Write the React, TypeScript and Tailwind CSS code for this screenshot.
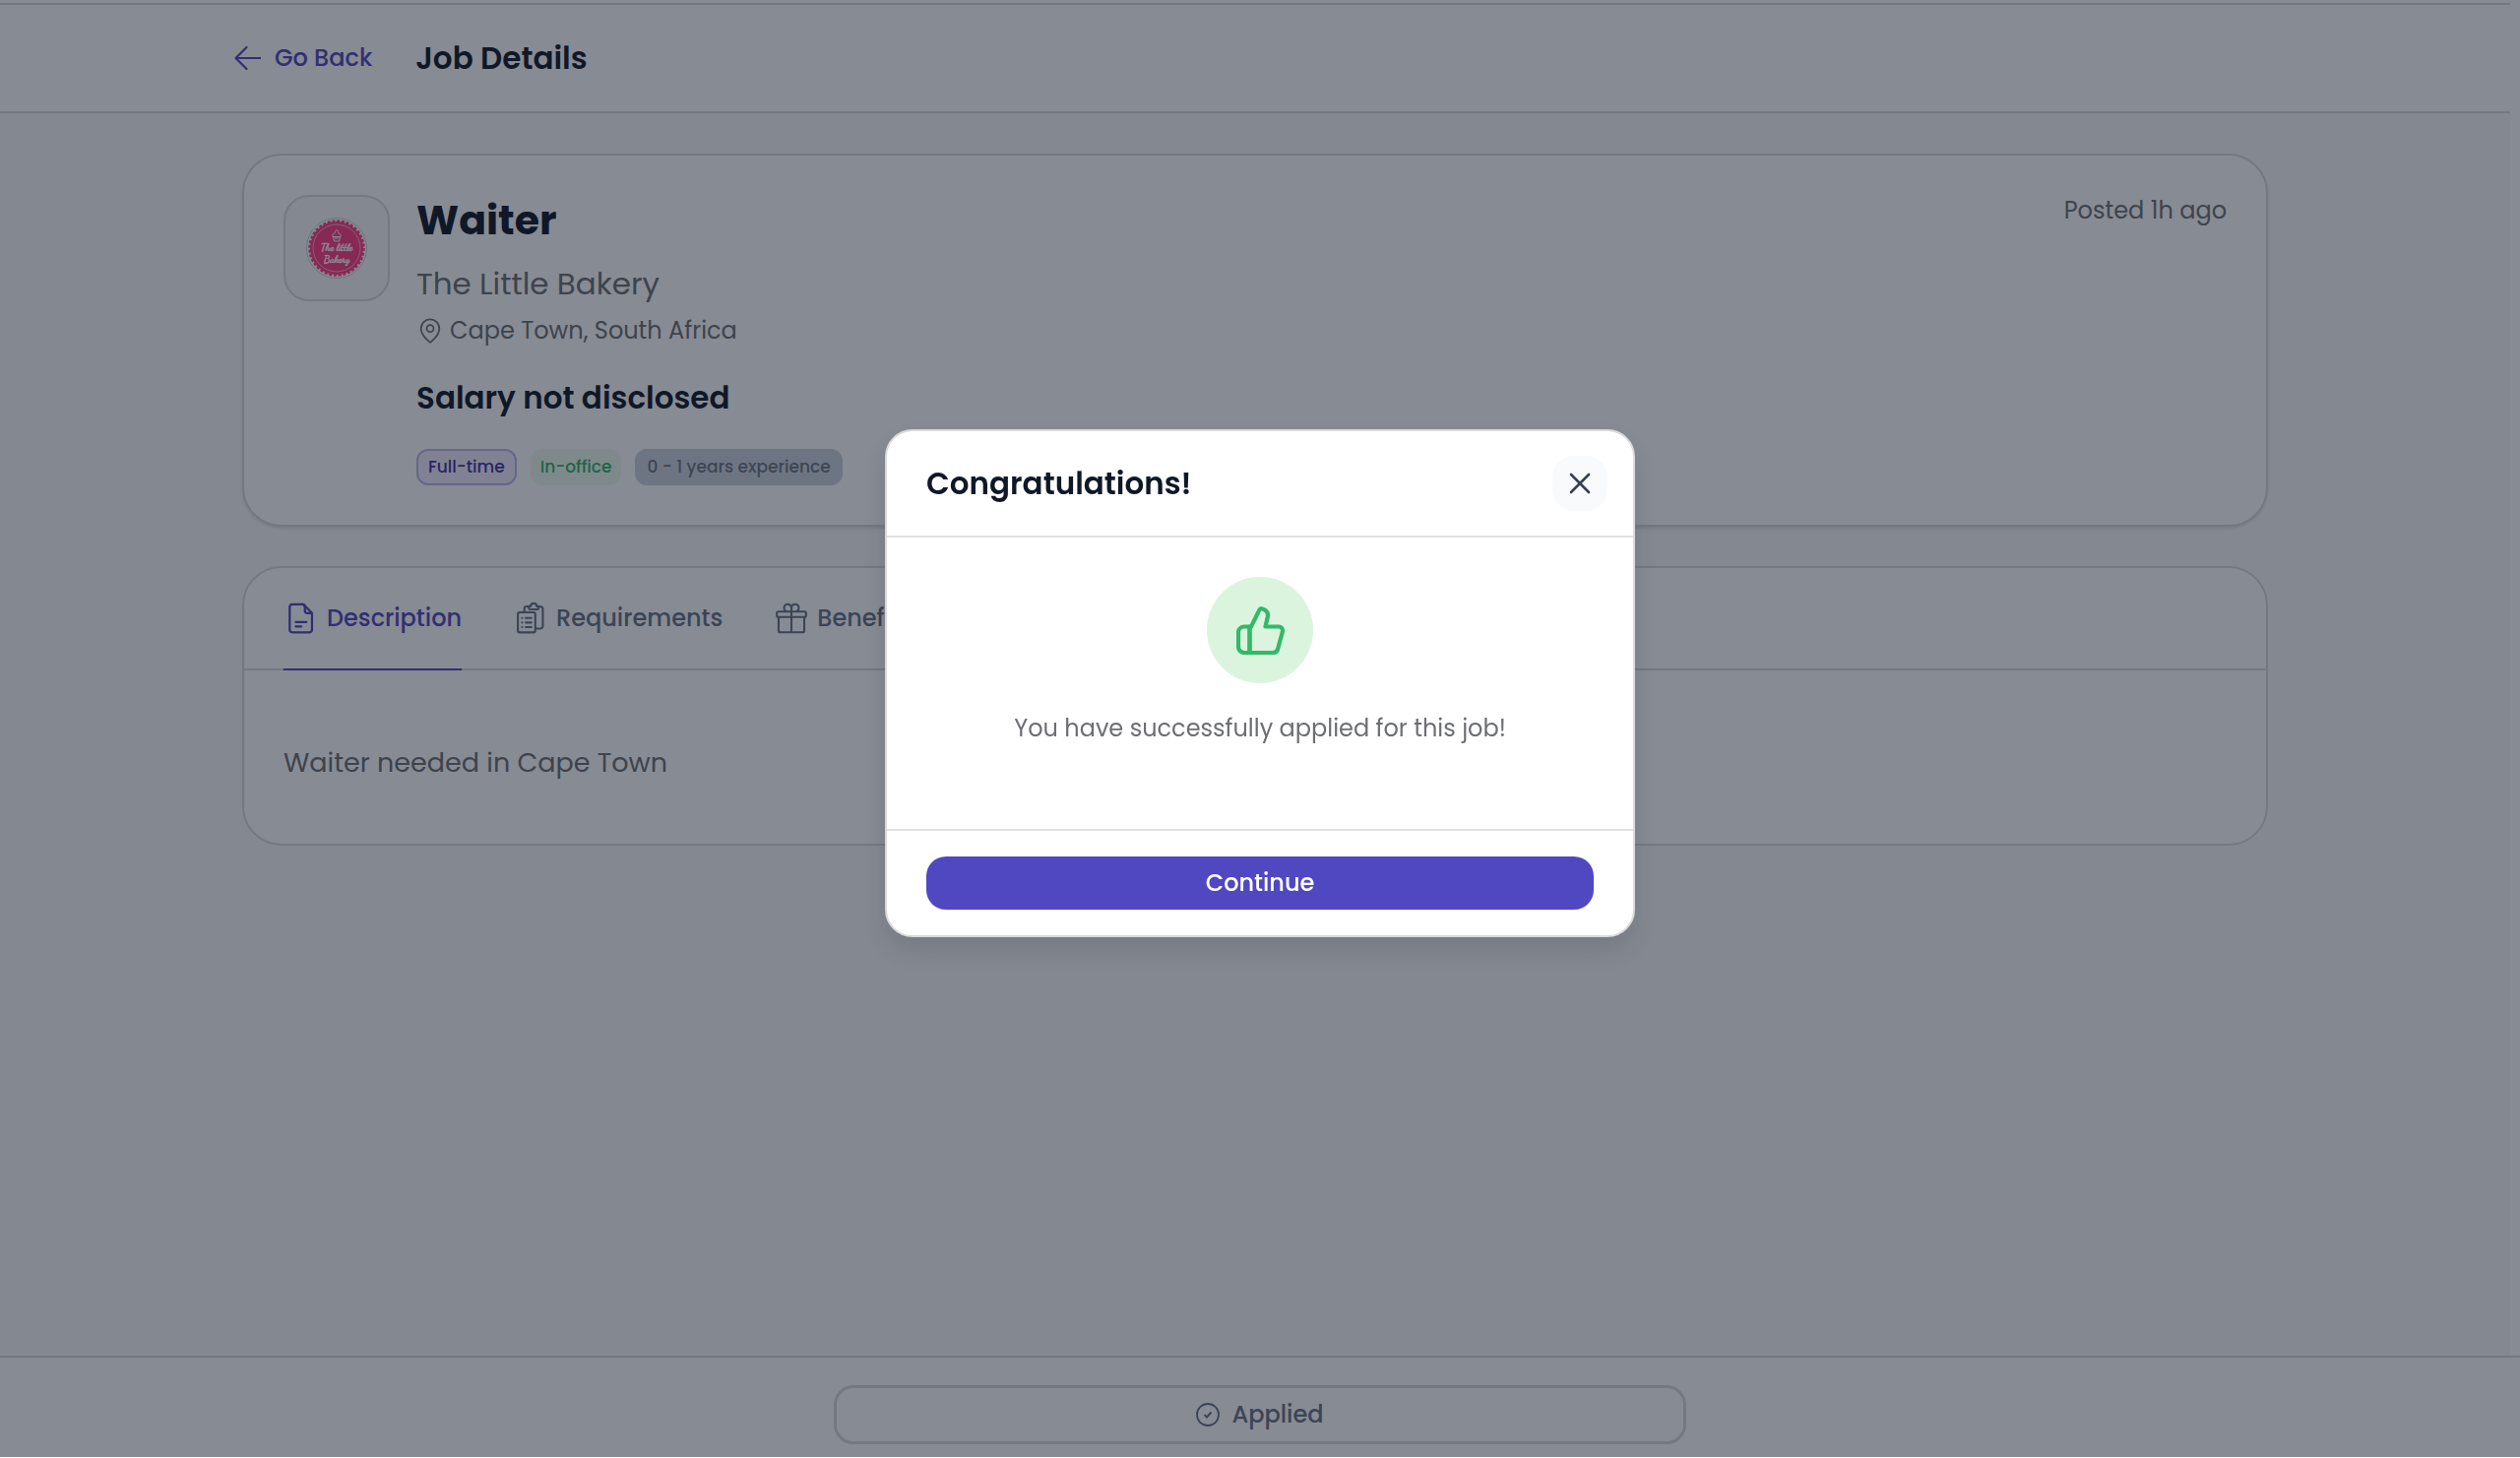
import React, { useState } from "react";
import { MapPin, X } from "lucide-react";

function BackArrowIcon() {
  return (
    <svg viewBox="0 0 28 28" className="h-7 w-7" fill="none" stroke="currentColor" strokeWidth="2.2" strokeLinecap="round" strokeLinejoin="round" aria-hidden="true">
      <path d="M13.500 3L2.500 14l11 11M2.500 14H28" />
    </svg>
  );
}

function ThumbsUpIcon() {
  return (
    <svg viewBox="0 0 49 49" className="h-[49px] w-[49px]" fill="none" stroke="currentColor" strokeWidth="4.2" strokeLinecap="round" strokeLinejoin="round" aria-hidden="true">
      <path d="M13.500 20.500h1.500L23.300 3.600c.7-1.400 1.800-1.700 3.200-1.200 4.400 1.400 6 4.600 5.300 8.100l-2.300 10H43a4 4 0 0 1 3.900 5L42 43.500A5 5 0 0 1 37 47H8a6 6 0 0 1-6-6V26.500a6 6 0 0 1 6-6zV47" />
      <path d="M13.500 20.500V47" />
    </svg>
  );
}

function DocumentIcon() {
  return (
    <svg viewBox="0 0 24 24" className="h-9 w-9" fill="none" stroke="currentColor" strokeWidth="1.5" strokeLinecap="round" strokeLinejoin="round" aria-hidden="true">
      <path d="M13.500 2.500H6A1.800 1.800 0 0 0 4.200 4.300v15.400A1.800 1.800 0 0 0 6 21.500h11.500a1.800 1.800 0 0 0 1.800-1.800V8.600z" />
      <path d="M12.800 2.500c1.300.3 1.700 1.200 1.700 2.500v1.800c0 1.200.6 1.800 1.800 1.800h3M8.300 14.500h7.200M8.300 17.600h3.700" />
    </svg>
  );
}

function ChecklistIcon() {
  return (
    <svg viewBox="0 0 24 24" className="h-9 w-9" fill="none" stroke="currentColor" strokeWidth="1.4" strokeLinecap="round" strokeLinejoin="round" aria-hidden="true">
      <rect x="3.400" y="8" width="11.800" height="13.600" rx="1.200" />
      <path d="M7.800 8V5.500A1.500 1.500 0 0 1 9.300 4h1.400M17.500 4h1a1.800 1.800 0 0 1 1.800 1.800v11.400a1.800 1.800 0 0 1-1.800 1.800h-3M10.800 5.200V3.900h1.300a2 2 0 0 1 4 0h1.300v1.300a.8.800 0 0 1-.8.800h-5a.8.800 0 0 1-.8-.8z" />
      <path d="M6.200 11.800h.1M8.700 11.800h3.800M6.200 14.900h.1M8.700 14.900h3.800M6.200 18h.1M8.700 18h3.800" />
    </svg>
  );
}

function GiftIcon() {
  return (
    <svg viewBox="0 0 24 24" className="h-9 w-9" fill="none" stroke="currentColor" strokeWidth="1.4" strokeLinecap="round" strokeLinejoin="round" aria-hidden="true">
      <path d="M20.700 11.200v9.100a1.200 1.200 0 0 1-1.200 1.200h-15a1.200 1.200 0 0 1-1.200-1.200v-9.100M12 4.900a2.500 2.500 0 1 0-2.600 2.600H12m0-2.600v2.600m0-2.600a2.500 2.500 0 1 1 2.600 2.600H12m0 0v14M3.100 11.200h17.800a1 1 0 0 0 1-1V8.500a1 1 0 0 0-1-1H3.100a1 1 0 0 0-1 1v1.700a1 1 0 0 0 1 1z" />
    </svg>
  );
}

function BakeryLogo() {
  return (
    <svg viewBox="0 0 64 64" className="h-16 w-16" role="img" aria-label="The Little Bakery">
      <circle cx="32" cy="32" r="30.500" fill="#ffffff" stroke="#c9cbd0" strokeWidth="1" />
      <circle cx="32" cy="32" r="27" fill="#ff3a80" />
      <circle cx="32" cy="32" r="27.500" fill="none" stroke="#ff3a80" strokeWidth="2.400" strokeDasharray="3 1.800" />
      <circle cx="32" cy="32" r="24" fill="none" stroke="#ffc0d8" strokeWidth="0.800" />
      <path d="M28.500 20.500l1 4.500h5l1-4.500M28 20.500c-1-2 1-3.500 2-3.500 0-1.500 1-2.500 2-3.500 1 1 2 2 2 3.500 1 0 3 1.500 2 3.500zM30 22h4" fill="none" stroke="#ffffff" strokeWidth="1" strokeLinejoin="round" />
      <text x="32" y="35" textAnchor="middle" fontSize="10" fontWeight="700" fill="#ffffff" stroke="#ffffff" strokeWidth="0.3" fontFamily="'Dancing Script', Lato, cursive">The little</text>
      <text x="32" y="47" textAnchor="middle" fontSize="10" fontWeight="700" fill="#ffffff" stroke="#ffffff" strokeWidth="0.3" fontFamily="'Dancing Script', Lato, cursive">Bakery</text>
    </svg>
  );
}

const tabs = [
  { label: "Description", Icon: DocumentIcon },
  { label: "Requirements", Icon: ChecklistIcon },
  { label: "Benefits", Icon: GiftIcon },
];

function TabBar() {
  const [active, setActive] = useState("Description");
  return (
    <div role="tablist" className="flex gap-13 border-b-2 border-[#d9d9dc] px-10">
      {tabs.map(({ label, Icon }) => (
        <button
          key={label}
          type="button"
          role="tab"
          aria-selected={active === label}
          onClick={() => setActive(label)}
          className={
            active === label
              ? "-mb-0.5 flex h-[104px] items-center gap-2 border-b-2 border-[#5046c0] text-2xl font-medium text-[#4f46c0]"
              : "-mb-0.5 flex h-[104px] items-center gap-2 border-b-2 border-transparent text-2xl font-medium text-[#667085]"
          }
        >
          <Icon />
          {label}
        </button>
      ))}
    </div>
  );
}

function JobCard() {
  return (
    <section className="flex gap-[27px] rounded-[40px] border-2 border-[#d9d9dc] bg-white p-10 shadow-[0_2px_3px_rgba(16,24,40,0.12)]">
      <div className="flex h-27 w-27 shrink-0 items-center justify-center rounded-[26px] border-2 border-[#d9d9dc] bg-[#f9fafb]">
        <BakeryLogo />
      </div>
      <div className="flex-1">
        <h2 className="text-[41px] leading-13 font-bold text-[#101828]">Waiter</h2>
        <p className="mt-4 text-[31px] leading-11 text-[#6d6e73]">The Little Bakery</p>
        <p className="mt-2 flex items-center gap-1.5 text-2xl leading-9 text-[#6d6e73]">
          <MapPin className="h-7 w-7" strokeWidth={1.5} aria-hidden="true" />
          Cape Town, South Africa
        </p>
        <p className="mt-6.5 text-[31px] leading-12 font-semibold text-[#101828]">Salary not disclosed</p>
        <ul className="mt-7 flex gap-3.5 text-[17px] leading-[33px] font-medium">
          <li className="rounded-xl border-2 border-[#bdb4e8] bg-[#f1ecff] px-2.5 text-[#42309c]">Full-time</li>
          <li className="rounded-xl border-2 border-[#eefbf0] bg-[#eefbf0] px-2 text-[#27b563]">In-office</li>
          <li className="rounded-xl border-2 border-[#ccd2dc] bg-[#ccd2dc] px-2.5 text-[#6b7280]">0 - 1 years experience</li>
        </ul>
      </div>
      <p className="text-2xl leading-8 text-[#6d6e73]">Posted 1h ago</p>
    </section>
  );
}

function CongratulationsDialog() {
  return (
    <div className="fixed inset-x-0 top-0 bottom-px flex justify-center bg-[#101828]/50 pt-109">
      <div role="dialog" aria-modal="true" aria-labelledby="dialog-title" className="h-fit w-full max-w-[762px] rounded-[28px] border-2 border-[#d9d9dc] bg-white shadow-[0_14px_24px_rgba(16,24,40,0.12)]">
        <header className="flex h-[108px] items-center justify-between border-b-2 border-[#dfe1e3] pr-[26px] pl-10">
          <h2 id="dialog-title" className="text-[31px] leading-12 font-semibold text-[#101828]">Congratulations!</h2>
          <button type="button" aria-label="Close" className="flex h-14 w-14 items-center justify-center rounded-[22px] bg-[#f9fafb] text-[#344054]">
            <X className="h-9 w-9" strokeWidth={1.75} />
          </button>
        </header>
        <div className="flex flex-col items-center px-10 pt-10 pb-20">
          <span className="flex h-27 w-27 items-center justify-center rounded-full bg-[#dbf4de] text-[#33b967]">
            <ThumbsUpIcon />
          </span>
          <p className="mt-6 text-2xl leading-11 text-[#6d6e73]">You have successfully applied for this job!</p>
        </div>
        <footer className="border-t-2 border-[#dfe1e3] px-10 py-[26px]">
          <button type="button" className="h-[54px] w-full rounded-[20px] bg-[#5048c0] text-2xl font-medium text-white">Continue</button>
        </footer>
      </div>
    </div>
  );
}

export default function App() {
  return (
    <div className="flex min-h-screen flex-col bg-white font-[Poppins,Inter,sans-serif]">
      <main className="mr-2.5 flex-1 bg-[#f9fafb]">
        <div className="bg-white pt-[3px]">
          <header className="flex h-28 items-center gap-11 border-y-2 border-[#d9d9dc] px-[237px]">
            <a href="#jobs" className="flex items-center gap-3.5 text-2xl font-medium text-[#5046c0]">
              <BackArrowIcon />
              Go Back
            </a>
            <h1 className="text-[31px] font-semibold text-[#101828]">Job Details</h1>
          </header>
        </div>
        <div className="flex flex-col gap-10 px-[246px] pt-[41px]">
          <JobCard />
          <section className="rounded-[40px] border-2 border-[#d9d9dc] bg-white">
            <TabBar />
            <p className="px-10 pt-18 pb-15 text-[27px] leading-11 text-[#6d6e73]">Waiter needed in Cape Town</p>
          </section>
        </div>
      </main>
      <footer className="flex h-[104px] justify-center border-t-2 border-[#d9d9dc] bg-white pt-7">
        <button type="button" className="flex h-15 w-full max-w-[866px] items-center justify-center gap-3 rounded-[20px] border-3 border-[#d9d9dc] text-2xl font-medium text-[#667085]">
          <svg viewBox="0 0 24 24" className="h-6 w-6" fill="none" stroke="currentColor" strokeWidth="1.8" aria-hidden="true">
            <circle cx="12" cy="12" r="11" />
            <path d="M8.500 12l2.500 2.500 4.500-5" strokeWidth="2" />
          </svg>
          Applied
        </button>
      </footer>
      <CongratulationsDialog />
    </div>
  );
}
